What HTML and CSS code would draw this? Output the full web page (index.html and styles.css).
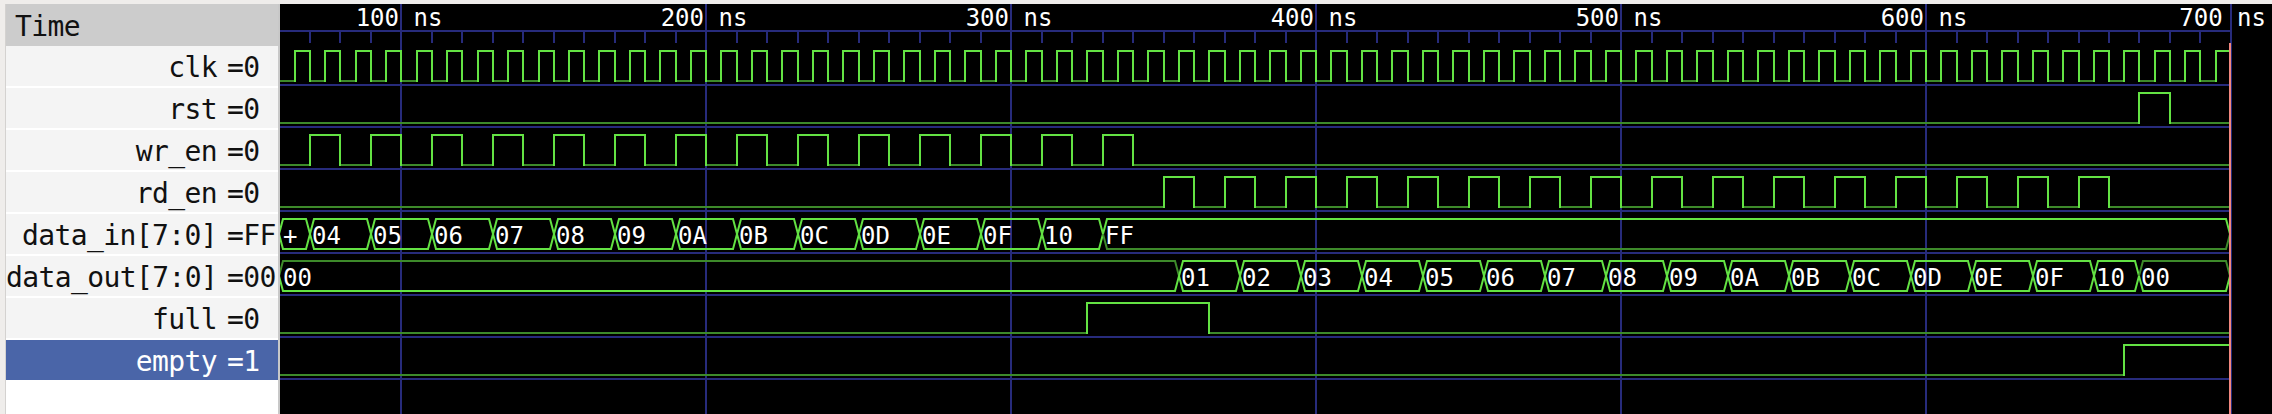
FILE: index.html
```html
<!DOCTYPE html>
<html lang="en">
<head>
<meta charset="utf-8">
<title>Waveform viewer</title>
<link rel="stylesheet" href="styles.css">
</head>
<body>
<div class="app">
  <div class="signals">
    <div class="sig-header">Time</div>
    <div class="sig-row"><span class="sig-name">clk</span><span class="sig-val">=0</span></div>
    <div class="sig-row"><span class="sig-name">rst</span><span class="sig-val">=0</span></div>
    <div class="sig-row"><span class="sig-name">wr_en</span><span class="sig-val">=0</span></div>
    <div class="sig-row"><span class="sig-name">rd_en</span><span class="sig-val">=0</span></div>
    <div class="sig-row"><span class="sig-name">data_in[7:0]</span><span class="sig-val">=FF</span></div>
    <div class="sig-row"><span class="sig-name">data_out[7:0]</span><span class="sig-val">=00</span></div>
    <div class="sig-row"><span class="sig-name">full</span><span class="sig-val">=0</span></div>
    <div class="sig-row selected"><span class="sig-name">empty</span><span class="sig-val">=1</span></div>
  </div>
  <div class="divider"></div>
  <div class="waves">
    <svg id="wave" xmlns="http://www.w3.org/2000/svg" width="1992" height="410" viewBox="280 4 1992 410"></svg>
  </div>
</div>
<script src="script.js"></script>
</body>
</html>
```

FILE: styles.css
```css
html, body {
  margin: 0;
  padding: 0;
}
body {
  width: 2272px;
  height: 414px;
  overflow: hidden;
  background: #efedeb;
  font-family: "DejaVu Sans Mono", monospace;
}
.app {
  display: flex;
  height: 414px;
  padding-top: 4px;
  box-sizing: border-box;
}
.signals {
  flex: none;
  width: 272px;
  margin-left: 5px;
  border-left: 1px solid #d4d2d0;
  background: #ffffff;
  overflow: hidden;
  font-size: 28px;
  letter-spacing: -0.6px;
  color: #111111;
}
.sig-header {
  height: 42px;
  line-height: 46px;
  padding-left: 9px;
  background: #cccccc;
}
.sig-row {
  display: flex;
  height: 40px;
  line-height: 44px;
  margin-bottom: 2px;
  background: #f4f4f4;
  white-space: nowrap;
}
.sig-row.selected {
  background: #4a65a8;
  color: #ffffff;
}
.sig-name {
  flex: none;
  width: 211px;
  text-align: right;
}
.sig-val {
  padding-left: 10px;
}
.divider {
  flex: none;
  width: 2px;
  background: #c8c8c8;
}
.waves {
  flex: 1;
  background: #000000;
  overflow: hidden;
}
.waves svg {
  display: block;
}
.wave-text {
  font-family: "DejaVu Sans Mono", monospace;
  font-size: 24px;
  fill: #ffffff;
}
```

FILE: script.js
```js
(function () {
  var NS = 'http://www.w3.org/2000/svg';
  var svg = document.getElementById('wave');
  var BRIGHT = '#63e243';
  var DARK = '#3d8a2a';
  var GRID = '#272b7c';
  var MARK = '#f2877f';
  var XEND = 2230;

  function X(t) { return Math.round(279.3 + (t - 60) * 3.0495); }

  function add(tag, attrs, text) {
    var e = document.createElementNS(NS, tag);
    for (var k in attrs) e.setAttribute(k, attrs[k]);
    if (text != null) e.textContent = text;
    svg.appendChild(e);
    return e;
  }
  function line(x1, y1, x2, y2, color, cap) {
    add('line', { x1: x1, y1: y1, x2: x2, y2: y2, stroke: color,
      'stroke-width': 2, 'stroke-linecap': cap || 'butt' });
  }

  /* grid & ruler */
  line(280, 31, 2231, 31, GRID);
  var t;
  for (t = 60; t <= 700; t += 10) line(X(t), 31, X(t), 43, GRID);
  for (var r = 0; r < 8; r++) line(280, 85 + 42 * r, 2231, 85 + 42 * r, GRID);
  for (t = 100; t <= 700; t += 100) {
    line(X(t), 4, X(t), 414, GRID);
    var lab = add('text', { 'class': 'wave-text', y: 26 }, t + ' ns');
    if (t === 700) {
      lab.setAttribute('x', 2266);
      lab.setAttribute('text-anchor', 'end');
    } else {
      lab.setAttribute('x', X(t) - 2);
      lab.setAttribute('text-anchor', 'middle');
    }
  }

  /* binary signals */
  function binary(row, tr) {
    var yb = 85 + 42 * row, yh = yb - 34, yl = yb - 4, i;
    for (i = 0; i < tr.length; i++) {
      var x1 = i === 0 ? 279 : X(tr[i][0]);
      var x2 = i + 1 < tr.length ? X(tr[i + 1][0]) : XEND;
      var v = tr[i][1];
      line(x1, v ? yh : yl, x2, v ? yh : yl, v ? BRIGHT : DARK, 'square');
    }
    for (i = 1; i < tr.length; i++) {
      var x = X(tr[i][0]);
      line(x, yh, x, yl, BRIGHT, 'square');
    }
  }
  function pulses(list) {
    var tr = [[60, 0]];
    list.forEach(function (p) { tr.push([p[0], 1]); tr.push([p[1], 0]); });
    return tr;
  }

  var clk = [[60, 0]];
  for (t = 65; t < 700; t += 5) clk.push([t, t % 10 === 5 ? 1 : 0]);
  binary(0, clk);

  binary(1, pulses([[670, 680]]));

  var wr = [];
  for (var k = 0; k < 14; k++) wr.push([70 + 20 * k, 80 + 20 * k]);
  binary(2, pulses(wr));

  var rd = [];
  for (k = 0; k < 16; k++) rd.push([350 + 20 * k, 360 + 20 * k]);
  binary(3, pulses(rd));

  binary(6, pulses([[325, 365]]));
  binary(7, [[60, 0], [665, 1]]);

  /* buses */
  function hex(n) { var s = n.toString(16).toUpperCase(); return s.length < 2 ? '0' + s : s; }
  function bus(row, segs) {
    var yb = 85 + 42 * row, yt = yb - 34, ybo = yb - 4, ym = yb - 19, d = 4;
    for (var i = 0; i < segs.length; i++) {
      var a = i === 0 ? 279 : X(segs[i][0]);
      var b = i + 1 < segs.length ? X(segs[i + 1][0]) : XEND;
      add('path', { d: 'M' + a + ' ' + ym + ' L' + (a + d) + ' ' + yt + ' L' + (b - d) + ' ' + yt + ' L' + b + ' ' + ym,
        stroke: segs[i][2], 'stroke-width': 2, fill: 'none', 'stroke-linejoin': 'miter' });
      add('path', { d: 'M' + a + ' ' + ym + ' L' + (a + d) + ' ' + ybo + ' L' + (b - d) + ' ' + ybo + ' L' + b + ' ' + ym,
        stroke: segs[i][3], 'stroke-width': 2, fill: 'none', 'stroke-linejoin': 'miter' });
      add('text', { 'class': 'wave-text', x: i === 0 ? 283 : a + 2, y: yb - 9 }, segs[i][1]);
    }
  }

  var din = [[60, '+', BRIGHT, BRIGHT]];
  for (k = 0; k < 13; k++) din.push([70 + 20 * k, hex(4 + k), BRIGHT, BRIGHT]);
  din.push([330, 'FF', BRIGHT, DARK]);
  bus(4, din);

  var dout = [[60, '00', DARK, BRIGHT]];
  for (k = 0; k < 16; k++) dout.push([355 + 20 * k, hex(1 + k), BRIGHT, BRIGHT]);
  dout.push([670, '00', DARK, BRIGHT]);
  bus(5, dout);

  /* marker */
  line(2230, 43, 2230, 414, MARK);
})();
```
